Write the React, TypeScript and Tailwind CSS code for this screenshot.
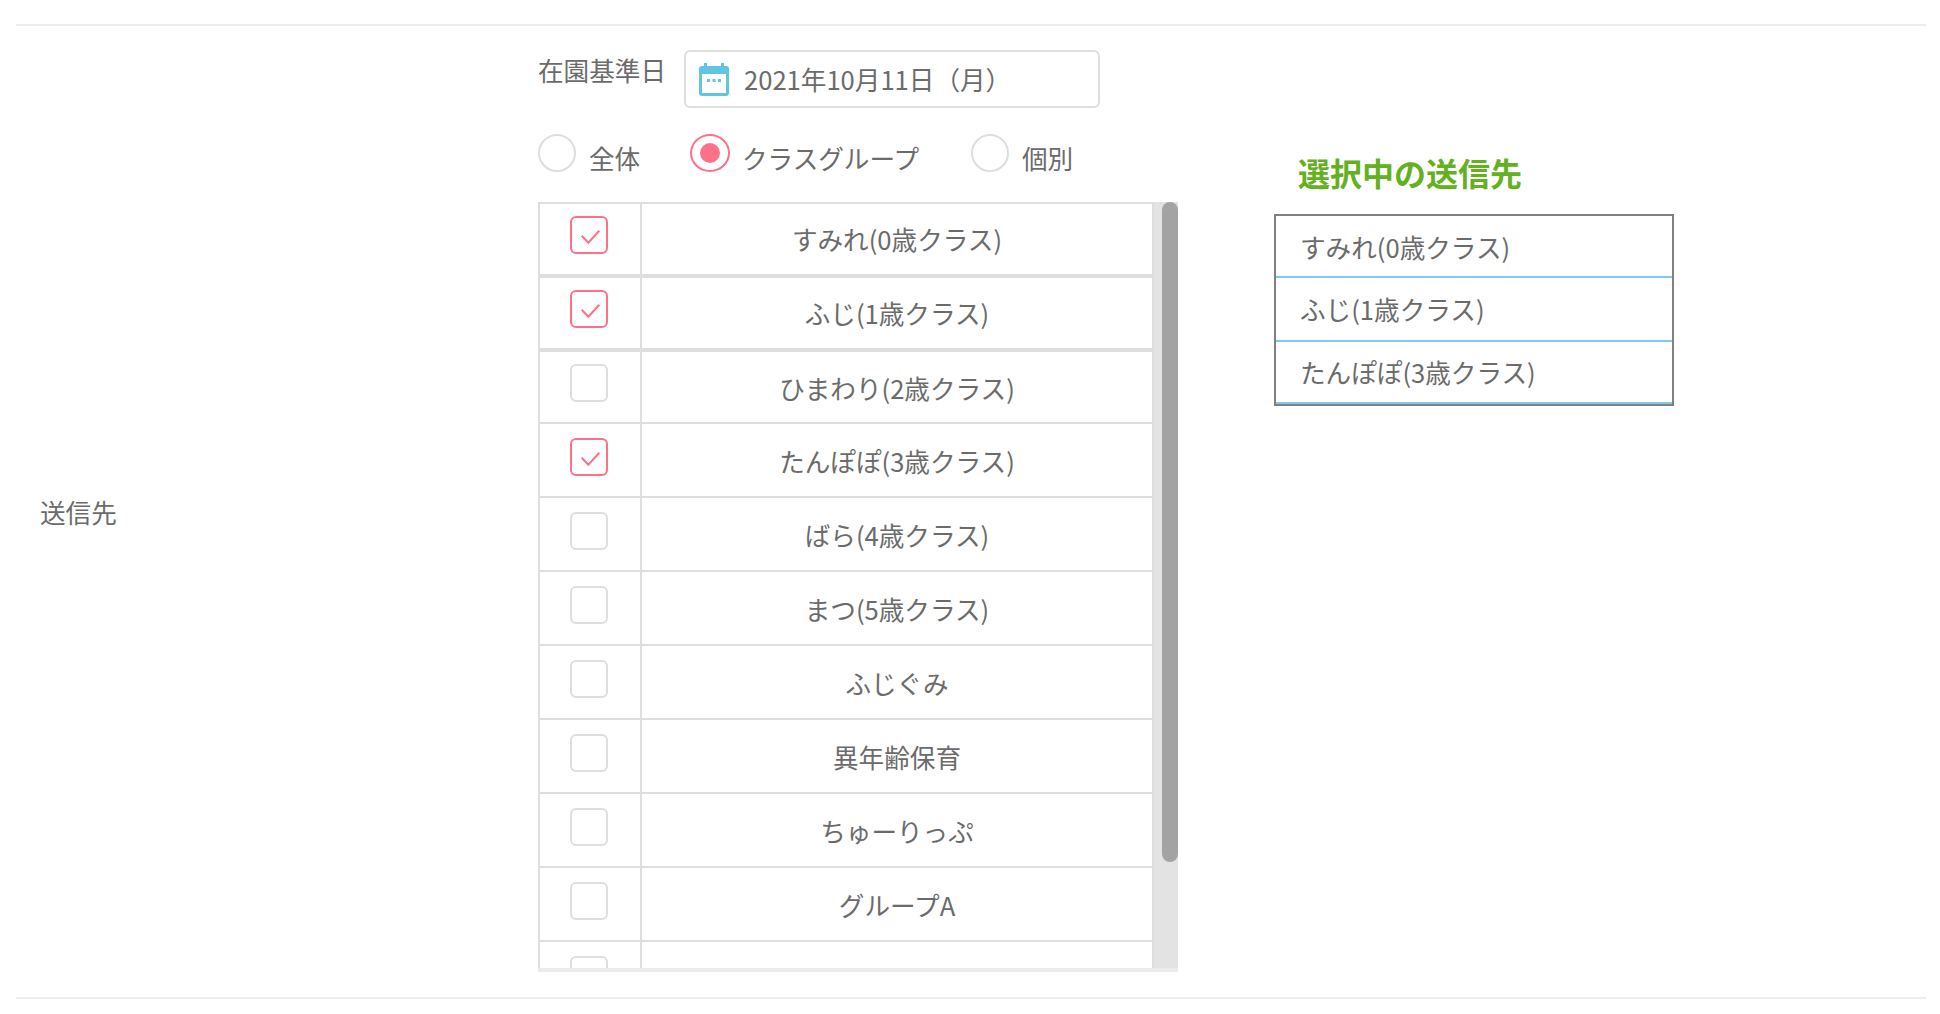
const rows: [string, boolean, boolean][] = [
  ["すみれ(0歳クラス)", true, true],
  ["ふじ(1歳クラス)", true, true],
  ["ひまわり(2歳クラス)", false, false],
  ["たんぽぽ(3歳クラス)", true, false],
  ["ばら(4歳クラス)", false, false],
  ["まつ(5歳クラス)", false, false],
  ["ふじぐみ", false, false],
  ["異年齢保育", false, false],
  ["ちゅーりっぷ", false, false],
  ["グループA", false, false],
  ["", false, false],
];

const selected = [
  { name: "すみれ(0歳クラス)", cls: "h-[62px] pt-[2px]" },
  { name: "ふじ(1歳クラス)", cls: "h-[64px] pt-[1px]" },
  { name: "たんぽぽ(3歳クラス)", cls: "h-[62px]" },
];

function rowClass(i: number) {
  if (i === 0) return "h-[76px] border-t-2 border-b-4 ";
  if (i === 1) return "h-[74px] border-b-4 ";
  if (i === 2) return "h-[72px] border-b-2 ";
  return "h-[74px] border-b-2 ";
}

function CheckBox({ checked }: { checked: boolean }) {
  return (
    <div
      className={
        "w-[38px] h-[38px] rounded-[6px] border-2 flex items-center justify-center " +
        (checked ? "border-[#ff7089]" : "border-[#dedede]")
      }
    >
      {checked && (
        <svg width="38" height="38" viewBox="0 0 38 38" className="shrink-0">
          <path d="M11.7 19.7 L18.3 26.7 L29.3 14.7" fill="none" stroke="#ff7089" strokeWidth="2" />
        </svg>
      )}
    </div>
  );
}

function Radio({ checked, label, labelClass }: { checked?: boolean; label: string; labelClass: string }) {
  return (
    <div className="flex items-start">
      <div
        className={
          "h-[38px] rounded-[50%] border-2 flex items-center justify-center " +
          (checked ? "w-[40px] border-[#ff7089]" : "w-[38px] border-[#dedede]")
        }
      >
        {checked && <div className="w-[20px] h-[20px] rounded-full bg-[#ff7089]" />}
      </div>
      <span className={"mt-[5px] leading-[38px] " + labelClass}>{label}</span>
    </div>
  );
}

function CalendarIcon() {
  return (
    <svg width="30" height="33" viewBox="0 0 30 33" className="shrink-0">
      <rect x="5" y="0" width="3" height="6" fill="#5fc5e0" />
      <rect x="22" y="0" width="3" height="6" fill="#5fc5e0" />
      <rect x="0" y="3" width="30" height="30" rx="3" fill="#5fc5e0" />
      <rect x="3" y="11" width="24" height="19" fill="#ffffff" />
      <rect x="8" y="16" width="3" height="3" fill="#5fc5e0" />
      <rect x="13.5" y="16" width="3" height="3" fill="#5fc5e0" />
      <rect x="19" y="16" width="3" height="3" fill="#5fc5e0" />
    </svg>
  );
}

export default function App() {
  return (
    <div className="h-[1014px] w-[1940px] bg-white pt-[24px] px-4 text-[#6b6b6b] text-[25.6px] [font-family:'Noto_Sans_CJK_JP','Noto_Sans',sans-serif] overflow-hidden">
      <div className="h-[975px] w-[1910px] border-y-2 border-[#ededed] flex">
        <div className="w-[522px] shrink-0 pl-6 flex items-center">
          <span className="mt-[2px]">送信先</span>
        </div>
        <div className="w-[640px] shrink-0 pt-[24px]">
          <div className="flex items-start h-[58px]">
            <span className="w-[146px] leading-[39px] whitespace-nowrap">在園基準日</span>
            <div className="w-[416px] h-[58px] rounded-[6px] border-2 border-[#dedede] flex items-center pl-[13px]">
              <CalendarIcon />
              <span className="ml-[15px] mt-[1px]">2021年10月11日（月）</span>
            </div>
          </div>
          <div className="flex mt-[26px] h-[68px]">
            <Radio label="全体" labelClass="ml-[13px] w-[101px]" />
            <Radio checked label="クラスグループ" labelClass="ml-[12px] w-[229px]" />
            <Radio label="個別" labelClass="ml-[13px]" />
          </div>
          <div className="flex flex-col h-[770px] w-[640px] bg-[#ebebeb]">
            <div className="flex h-[766px] overflow-hidden">
              <div className="w-[616px] shrink-0 bg-white">
                {rows.map(([name, checked], i) => (
                  <div key={i} className={"shrink-0 flex border-x-2 border-[#dedede] " + rowClass(i)}>
                    <div
                      className={
                        "w-[102px] shrink-0 border-r-2 border-[#dedede] pl-[30px] " +
                        (i < 3 ? "pt-[12px]" : "pt-[14px]")
                      }
                    >
                      <CheckBox checked={checked} />
                    </div>
                    <div className={"flex-1 flex items-center justify-center " + (i >= 2 ? "pt-[2px]" : "")}>
                      {name}
                    </div>
                  </div>
                ))}
              </div>
              <div className="flex-1 bg-[#e3e3e3] flex justify-end">
                <div className="w-[16px] h-[660px] bg-[#a3a3a3] rounded-[8px]" />
              </div>
            </div>
          </div>
        </div>
        <div className="ml-[96px] w-[400px] pt-[120px]">
          <div className="pl-[24px] text-[#63b021] font-bold text-[32px] leading-[52px] mb-[16px]">選択中の送信先</div>
          <div className="border-2 border-[#808080] h-[192px]">
            {selected.map(({ name, cls }) => (
              <div key={name} className={"border-b-2 border-[#7fcbe8] pl-[24px] flex items-center " + cls}>
                {name}
              </div>
            ))}
          </div>
        </div>
      </div>
    </div>
  );
}
